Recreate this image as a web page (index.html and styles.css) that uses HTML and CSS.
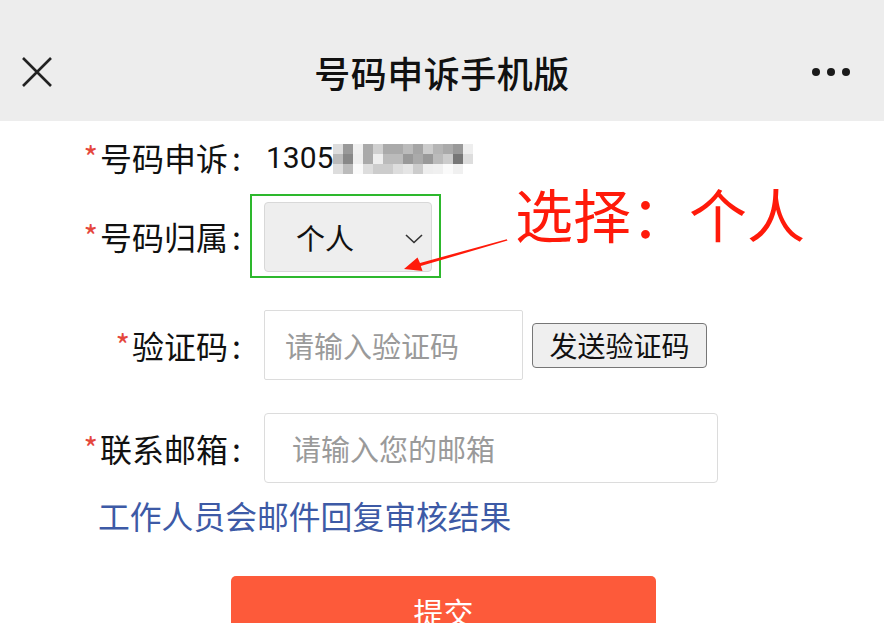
FILE: index.html
```html
<!DOCTYPE html>
<html lang="zh-CN">
<head>
    <meta charset="UTF-8">
    <meta name="viewport" content="width=device-width, initial-scale=1.0">
    <title>号码申诉手机版</title>
    <link rel="stylesheet" href="styles.css">
</head>
<body>
    <header class="topbar">
        <div class="topbar-left">
            <svg class="icon-close" width="32" height="32" viewBox="0 0 32 32">
                <path d="M2 2 L30 30 M30 2 L2 30" stroke="#222" stroke-width="2.6" fill="none"/>
            </svg>
        </div>
        <h1 class="topbar-title">号码申诉手机版</h1>
        <div class="topbar-right">
            <span class="dot"></span><span class="dot"></span><span class="dot"></span>
        </div>
    </header>

    <main class="appeal">
        <form id="appealForm" action="/submit-appeal" method="POST">
            <div class="row row-phone">
                <div class="label"><span class="star">*</span>号码申诉<span class="colon">:</span></div>
                <div class="field">
                    <span class="phone">1305</span><span class="mosaic" id="mosaic"></span>
                </div>
            </div>

            <div class="row row-owner">
                <div class="label"><span class="star">*</span>号码归属<span class="colon">:</span></div>
                <div class="field">
                    <div class="highlight">
                        <div class="select-box">
                            <span>个人</span>
                            <svg class="chevron" width="18" height="10" viewBox="0 0 18 10">
                                <path d="M1 1 L9 8.5 L17 1" stroke="#333" stroke-width="1.6" fill="none"/>
                            </svg>
                        </div>
                    </div>
                </div>
            </div>

            <div class="row row-code">
                <div class="label"><span class="star">*</span>验证码<span class="colon">:</span></div>
                <div class="field">
                    <input class="input input-code" type="text" name="code" placeholder="请输入验证码">
                    <button type="button" class="send-btn">发送验证码</button>
                </div>
            </div>

            <div class="row row-mail">
                <div class="label"><span class="star">*</span>联系邮箱<span class="colon">:</span></div>
                <div class="field">
                    <input class="input input-mail" type="text" name="email" placeholder="请输入您的邮箱">
                </div>
            </div>

            <p class="note">工作人员会邮件回复审核结果</p>

            <button type="submit" class="submit-btn">提交</button>
        </form>

        <!-- callout pointing at the owner select -->
        <div class="callout">选择：个人</div>
        <svg class="callout-arrow" width="884" height="623" viewBox="0 0 884 623">
            <polygon fill="#ff1a0a" points="404,253 422.5,255 420.8,250 507.5,224.6 506.8,223.2 420,247 417.5,241.5"/>
        </svg>
    </main>

    <script>
        // blurred tail of the phone number, drawn as a pixel mosaic
        const shades = [
            'ddd', '999', 'f0f0f0', 'aaa', 'd0d0d0', 'aaa', 'aaa', 'bbb', 'a5a5a5', 'ccc', 'b5b5b5', 'aaa', '999', 'eee',
            'bbb', '888', 'eee', 'aaa', 'eee', 'bbb', 'bbb', '999', 'aaa', '999', 'bbb', 'ccc', '777', 'ddd',
            'ddd', 'bbb', 'fafafa', 'ddd', 'ccc', 'ccc', 'ddd', 'e5e5e5', 'ccc', 'eee', 'f0f0f0', 'fafafa', 'f0f0f0', 'fff'
        ];
        const mosaic = document.getElementById('mosaic');
        shades.forEach(function(c) {
            const cell = document.createElement('span');
            cell.style.background = '#' + c;
            mosaic.appendChild(cell);
        });
    </script>
</body>
</html>
```

FILE: styles.css
```css
* {
    box-sizing: border-box;
}

body {
    margin: 0;
    font-family: "Noto Sans CJK SC", "Noto Sans", sans-serif;
    background-color: #fff;
    color: #111;
    width: 884px;
    height: 623px;
    overflow: hidden;
}

.topbar {
    height: 121px;
    padding-top: 22px;
    background-color: #ededed;
    display: grid;
    grid-template-columns: 1fr auto 1fr;
    align-items: center;
}

.topbar-left {
    padding-left: 21px;
    display: flex;
    align-items: center;
}

.topbar-title {
    margin: 0;
    font-size: 36px;
    font-weight: 500;
    color: #111;
    letter-spacing: 0.5px;
}

.topbar-right {
    display: flex;
    justify-content: flex-end;
    gap: 7px;
    padding-right: 34px;
}

.dot {
    width: 8px;
    height: 8px;
    border-radius: 50%;
    background: #1a1a1a;
}

.appeal {
    position: relative;
}

.row {
    display: flex;
    align-items: center;
}

.label {
    width: 241px;
    text-align: right;
    font-size: 32px;
    color: #111;
    white-space: nowrap;
}

.colon {
    margin-left: 4px;
}

.star {
    color: #e5473d;
    font-size: 31px;
    position: relative;
    top: -1px;
    margin-right: 2px;
}

.field {
    margin-left: 23px;
    display: flex;
    align-items: center;
}

.row-phone {
    margin-top: 16px;
    height: 40px;
}

.phone {
    font-family: Roboto, "Noto Sans", sans-serif;
    font-size: 30px;
    margin-left: 2px;
}

.mosaic {
    display: grid;
    grid-template-columns: repeat(14, 10px);
    grid-auto-rows: 10px;
    margin-top: 4px;
}

.row-owner {
    margin-top: 17px;
}

.row-owner .field {
    margin-left: 9px;
}

.highlight {
    border: 2px solid #2db82d;
    padding: 6px 7px 4px 12px;
}

.select-box {
    width: 168px;
    height: 70px;
    background: #eeeeee;
    border: 1px solid #d8d8d8;
    border-radius: 4px;
    display: flex;
    align-items: center;
    padding-left: 31px;
    font-size: 29px;
    color: #111;
}

.chevron {
    margin-left: 51px;
    margin-top: 4px;
}

.row-code {
    margin-top: 32px;
}

.input {
    height: 70px;
    border: 1px solid #dcdcdc;
    font-family: "Noto Sans CJK SC", sans-serif;
    font-size: 29px;
    padding: 0 20px;
    color: #111;
    outline: none;
}

.input::placeholder {
    color: #9a9a9a;
}

.input-code {
    width: 259px;
    border-radius: 2px;
}

.send-btn {
    margin-left: 9px;
    width: 175px;
    height: 45px;
    background: #efefef;
    border: 1px solid #767676;
    border-radius: 4px;
    font-family: "Noto Sans CJK SC", sans-serif;
    font-size: 28px;
    color: #111;
    padding: 0;
}

.row-mail {
    margin-top: 33px;
}

.input-mail {
    width: 454px;
    border-radius: 4px;
    padding-left: 27px;
}

.note {
    margin: 12px 0 0 98px;
    height: 40px;
    line-height: 40px;
    font-size: 31.8px;
    color: #3d5aa6;
}

.submit-btn {
    display: block;
    margin: 41px 0 0 231px;
    width: 425px;
    height: 70px;
    background-color: #fd5a3a;
    color: #fff;
    border: none;
    border-radius: 5px;
    font-family: "Noto Sans CJK SC", sans-serif;
    font-size: 30px;
    cursor: pointer;
}

.callout {
    position: absolute;
    left: 515px;
    top: 47px;
    font-size: 58px;
    line-height: 1;
    color: #ff1a0a;
    white-space: nowrap;
}

.callout-arrow {
    position: absolute;
    left: 0;
    top: -121px;
    pointer-events: none;
}
```
